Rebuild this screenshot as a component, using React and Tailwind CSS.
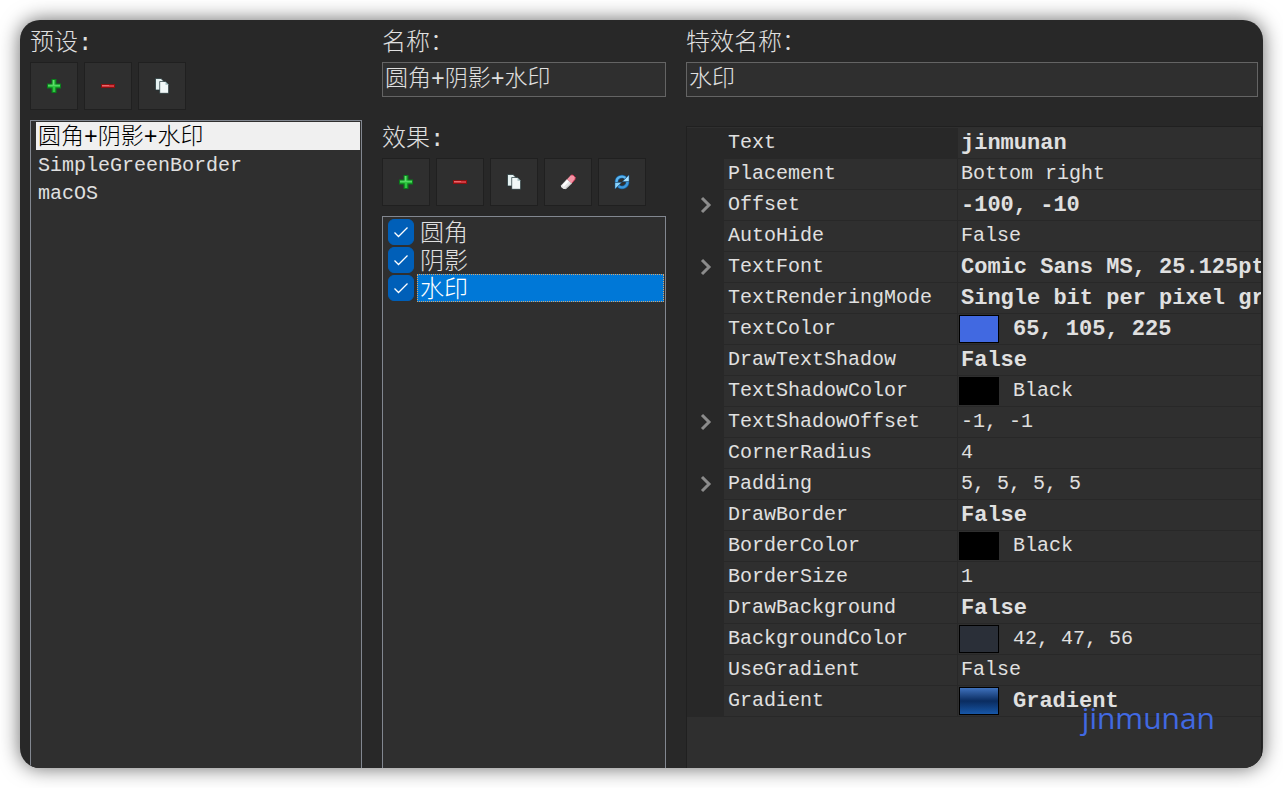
import React, { useState } from 'react';
import clsx from 'clsx';

const presets = ['圆角+阴影+水印', 'SimpleGreenBorder', 'macOS'];

const effects = ['圆角', '阴影', '水印'];

const properties = [
  { name: 'Text', value: 'jinmunan', changed: true },
  { name: 'Placement', value: 'Bottom right' },
  { name: 'Offset', value: '-100, -10', changed: true, expandable: true },
  { name: 'AutoHide', value: 'False' },
  { name: 'TextFont', value: 'Comic Sans MS, 25.125pt', changed: true, expandable: true },
  { name: 'TextRenderingMode', value: 'Single bit per pixel gr', changed: true },
  { name: 'TextColor', value: '65, 105, 225', changed: true, swatch: 'bg-[#4169e1]' },
  { name: 'DrawTextShadow', value: 'False', changed: true },
  { name: 'TextShadowColor', value: 'Black', swatch: 'bg-black' },
  { name: 'TextShadowOffset', value: '-1, -1', expandable: true },
  { name: 'CornerRadius', value: '4' },
  { name: 'Padding', value: '5, 5, 5, 5', expandable: true },
  { name: 'DrawBorder', value: 'False', changed: true },
  { name: 'BorderColor', value: 'Black', swatch: 'bg-black' },
  { name: 'BorderSize', value: '1' },
  { name: 'DrawBackground', value: 'False', changed: true },
  { name: 'BackgroundColor', value: '42, 47, 56', swatch: 'bg-[#2a2f38]' },
  { name: 'UseGradient', value: 'False' },
  {
    name: 'Gradient',
    value: 'Gradient',
    changed: true,
    swatch: 'bg-linear-to-b from-[#3f72bd] via-[#0a2c60] to-[#1757a8]',
  },
];

const AddIcon = () => (
  <svg className="h-4 w-4" viewBox="0 0 16 16">
    <path d="M5.500 1h5v4.500H15v5h-4.500V15h-5v-4.500H1v-5h4.500z" fill="#0b7d1c" />
    <path d="M6.700 2h2.600v4.700H14v2.600H9.300V14H6.700V9.300H2V6.700h4.700z" fill="#2fc741" />
    <path d="M6.700 2H8v4.700h6v1.100H2V6.700h4.700z" fill="#62dd6f" />
  </svg>
);

const RemoveIcon = () => (
  <svg className="h-4 w-4" viewBox="0 0 16 16">
    <path d="M1 6h14v4H1z" fill="#8d1010" />
    <path d="M2 7h12v2H2z" fill="#cf3940" />
    <path d="M2 7h7v1H2z" fill="#e8686b" />
  </svg>
);

const CopyIcon = () => (
  <svg className="h-4 w-4" viewBox="0 0 16 16">
    <path d="M1.500.5H7l3 3V12H1.500z" fill="#e6f2f2" stroke="#1c3033" strokeWidth="0.7" />
    <path d="M5.700 3.500h6l2.900 3V15.300H5.700z" fill="#f1f8f8" stroke="#1c3033" strokeWidth="0.7" />
    <path d="M11.500 3.700v3h3z" fill="#9dbabd" />
  </svg>
);

const EraserIcon = () => (
  <svg className="h-4 w-4" viewBox="0 0 16 16">
    <path d="M1 11.500 7 5l5 4.500L6 15H3.500L1 13z" fill="#e6e6e6" />
    <path d="M7 5.200 11 1h2l2.200 2.200v2L11.700 9.500z" fill="#f493a4" />
    <path d="M11 1h2l2.200 2.200v2l-3 3.700" fill="none" stroke="#c92a49" strokeWidth="0.8" />
    <path d="m3 12 5-5.300" stroke="#fff" strokeWidth="2" />
    <path d="m5.500 14.900 6-5.500" stroke="#a0a0a0" strokeWidth="0.8" />
  </svg>
);

const RefreshIcon = () => (
  <svg className="h-4 w-4" viewBox="0 0 16 16" fill="none">
    <path d="M2.500 8A5.500 5.300 0 0 1 11.500 3.800" stroke="#155f9e" strokeWidth="3.600" />
    <path d="M13.500 8A5.500 5.300 0 0 1 4.500 12.200" stroke="#155f9e" strokeWidth="3.600" />
    <path d="M2.500 8A5.500 5.300 0 0 1 11.500 3.800" stroke="#5ab4ee" strokeWidth="2.200" />
    <path d="M13.500 8A5.500 5.300 0 0 1 4.500 12.200" stroke="#3c97dc" strokeWidth="2.200" />
    <path d="M15 1v6.500H8.500z" fill="#a5e0ff" stroke="#155f9e" strokeWidth="0.5" />
    <path d="M1 15V8.500h6.500z" fill="#8ad3fc" stroke="#155f9e" strokeWidth="0.5" />
  </svg>
);

const ToolButton = ({ label, children }) => (
  <button
    type="button"
    aria-label={label}
    className="flex h-12 w-12 items-center justify-center border border-[#202020] bg-[#2f2f2f] hover:bg-[#3a3a3a]"
  >
    {children}
  </button>
);

const TextField = ({ id, label, value, className }) => (
  <div className={clsx('flex flex-col', className)}>
    <label htmlFor={id} className="text-2xl leading-9">{label}</label>
    <input
      id={id}
      type="text"
      defaultValue={value}
      className="h-[35px] w-full border border-[#646464] bg-[#2f2f2f] px-0.5 pb-2 text-[23px] font-light outline-none"
    />
  </div>
);

const PresetPanel = () => {
  const [selected, setSelected] = useState(presets[0]);

  return (
    <section className="flex min-h-0 flex-col">
      <h2 className="text-2xl leading-9">预设:</h2>
      <div className="mb-2.5 flex gap-1.5">
        <ToolButton label="Add preset"><AddIcon /></ToolButton>
        <ToolButton label="Remove preset"><RemoveIcon /></ToolButton>
        <ToolButton label="Duplicate preset"><CopyIcon /></ToolButton>
      </div>
      <ul className="flex-1 border border-b-0 border-[#828790] bg-[#2f2f2f] py-px pr-px pl-[5px]">
        {presets.map((preset, index) => (
          <li key={preset}>
            <button
              type="button"
              onClick={() => setSelected(preset)}
              className={clsx(
                'block h-7 w-full px-0.5 text-left leading-8',
                index === 0 ? 'text-[23px]' : 'text-xl',
                selected === preset && 'bg-[#f0f0f0] text-black'
              )}
            >
              {preset}
            </button>
          </li>
        ))}
      </ul>
    </section>
  );
};

const EffectPanel = () => {
  const [selected, setSelected] = useState('水印');

  return (
    <section className="flex min-h-0 flex-col">
      <TextField id="preset-name" label="名称：" value="圆角+阴影+水印" className="mb-[25px]" />
      <h2 className="text-2xl leading-9">效果:</h2>
      <div className="mb-2.5 flex gap-1.5">
        <ToolButton label="Add effect"><AddIcon /></ToolButton>
        <ToolButton label="Remove effect"><RemoveIcon /></ToolButton>
        <ToolButton label="Duplicate effect"><CopyIcon /></ToolButton>
        <ToolButton label="Clear effects"><EraserIcon /></ToolButton>
        <ToolButton label="Refresh"><RefreshIcon /></ToolButton>
      </div>
      <ul className="flex-1 border border-b-0 border-[#828790] bg-[#2f2f2f] py-px pr-px pl-1">
        {effects.map((effect) => (
          <li key={effect} className="flex h-7 items-center gap-0.5">
            <span className="grid place-items-center px-px">
              <input
                type="checkbox"
                defaultChecked
                aria-label={effect}
                className="peer col-start-1 row-start-1 h-[26px] w-[26px] appearance-none rounded-md border border-[#828790] checked:border-[#005fb8] checked:bg-[#005fb8]"
              />
              <svg
                className="pointer-events-none invisible col-start-1 row-start-1 h-4 w-4 peer-checked:visible"
                viewBox="0 0 16 16"
                fill="none"
                stroke="white"
                strokeWidth="1.300"
              >
                <path d="m1.500 8.500 4 4 9-9" />
              </svg>
            </span>
            <button
              type="button"
              onClick={() => setSelected(effect)}
              className={clsx(
                'h-7 flex-1 border border-dotted px-0.5 pt-1 text-left text-2xl leading-6',
                selected === effect ? 'border-[#d9a56a] bg-[#0078d7] text-white' : 'border-transparent'
              )}
            >
              {effect}
            </button>
          </li>
        ))}
      </ul>
    </section>
  );
};

const PropertyRow = ({ property, active, onSelect }) => (
  <tr onClick={onSelect}>
    <td className="bg-[#282828] p-0 text-center">
      {property.expandable && (
        <button type="button" aria-label={`Expand ${property.name}`} className="block w-full">
          <svg className="mx-auto h-5 w-4" viewBox="0 0 16 20" fill="none" stroke="#8c8c8c" strokeWidth="3">
            <path d="m4 2 7 7-7 7" />
          </svg>
        </button>
      )}
    </td>
    <th
      scope="row"
      className={clsx(
        'truncate border-r border-b border-[#282828] p-0 pl-1 text-left text-xl leading-[30px] font-light',
        active && 'bg-[#282828]'
      )}
    >
      {property.name}
    </th>
    <td className="border-b border-[#282828] p-0">
      <div className="flex h-[30px] items-center overflow-hidden pl-px whitespace-nowrap">
        {property.swatch && (
          <span className={clsx('mr-3 h-7 w-10 shrink-0 border border-black', property.swatch)} />
        )}
        <span className={clsx('pl-0.5', property.changed ? 'text-[22px] font-bold' : 'text-xl')}>
          {property.value}
        </span>
      </div>
    </td>
  </tr>
);

const PropertyPanel = () => {
  const [active, setActive] = useState('Text');

  return (
    <section className="flex min-h-0 flex-col">
      <TextField id="effect-name" label="特效名称：" value="水印" className="mr-1 mb-[29px]" />
      <div className="flex-1 overflow-hidden border border-b-0 border-[#202020] bg-[#2f2f2f] pt-px">
        <table className="w-full table-fixed border-separate border-spacing-0">
          <colgroup>
            <col className="w-[37px]" />
            <col className="w-[234px]" />
            <col />
          </colgroup>
          <tbody>
            {properties.map((property) => (
              <PropertyRow
                key={property.name}
                property={property}
                active={active === property.name}
                onSelect={() => setActive(property.name)}
              />
            ))}
          </tbody>
        </table>
      </div>
    </section>
  );
};

const App = () => {
  return (
    <div className="h-screen bg-white p-5">
      <main className="relative grid h-full grid-cols-[332fr_284fr_576fr] grid-rows-[minmax(0,1fr)] gap-5 overflow-hidden rounded-[20px] bg-[#282828] pt-1.5 pr-px pl-2.5 font-['Liberation_Mono','Noto_Sans_CJK_SC',monospace] font-light text-[#e0e0e0] shadow-[0_0_20px_rgba(0,0,0,0.6)]">
        <PresetPanel />
        <EffectPanel />
        <PropertyPanel />

        {/* Watermark */}
        <p className="pointer-events-none absolute right-12 bottom-8 font-['Comic_Sans_MS','Open_Sans',sans-serif] text-3xl font-medium text-[#4169e1]">
          jinmunan
        </p>
      </main>
    </div>
  );
};

export default App;
